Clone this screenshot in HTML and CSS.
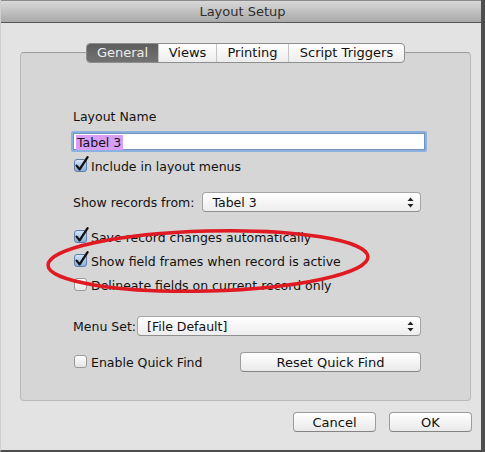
FILE: index.html
```html
<!DOCTYPE html>
<html lang="en">
<head>
    <meta charset="UTF-8">
    <meta name="viewport" content="width=device-width, initial-scale=1.0">
    <title>Layout Setup</title>
    <link rel="stylesheet" href="styles.css">
</head>
<body>
    <div class="window">
        <div class="titlebar">Layout Setup</div>

        <div class="sheet">
            <div class="panel">
                <div class="tabs">
                    <span class="tab active">General</span>
                    <span class="tab">Views</span>
                    <span class="tab">Printing</span>
                    <span class="tab">Script Triggers</span>
                </div>

                <div class="form">
                    <div class="label">Layout Name</div>
                    <div class="text-field"><span class="selected">Tabel 3</span></div>

                    <div class="check-row first">
                        <svg class="box" width="16" height="17" viewBox="0 0 16 17"><use href="#checked"/></svg>
                        <span>Include in layout menus</span>
                    </div>

                    <div class="field-row records">
                        <span class="field-label">Show records from:</span>
                        <div class="popup">
                            <span>Tabel 3</span>
                            <svg class="arrows" width="7" height="11" viewBox="0 0 7 11"><use href="#updown"/></svg>
                        </div>
                    </div>

                    <div class="check-group">
                        <div class="check-row">
                            <svg class="box" width="16" height="17" viewBox="0 0 16 17"><use href="#checked"/></svg>
                            <span>Save record changes automatically</span>
                        </div>
                        <div class="check-row">
                            <svg class="box" width="16" height="17" viewBox="0 0 16 17"><use href="#checked"/></svg>
                            <span>Show field frames when record is active</span>
                        </div>
                        <div class="check-row">
                            <svg class="box" width="16" height="17" viewBox="0 0 16 17"><use href="#unchecked"/></svg>
                            <span>Delineate fields on current record only</span>
                        </div>
                    </div>

                    <div class="field-row menu-set">
                        <span class="field-label">Menu Set:</span>
                        <div class="popup">
                            <span>[File Default]</span>
                            <svg class="arrows" width="7" height="11" viewBox="0 0 7 11"><use href="#updown"/></svg>
                        </div>
                    </div>

                    <div class="field-row quick-find">
                        <div class="check-row">
                            <svg class="box" width="16" height="17" viewBox="0 0 16 17"><use href="#unchecked"/></svg>
                            <span>Enable Quick Find</span>
                        </div>
                        <button class="push wide">Reset Quick Find</button>
                    </div>
                </div>

                <!-- hand drawn red mark over the checkboxes -->
                <svg class="ring" width="360" height="90" viewBox="0 0 360 90">
                    <ellipse cx="181" cy="42" rx="160" ry="30" transform="rotate(-1.5 181 42)" fill="none" stroke="#e01a22" stroke-width="3.5"/>
                </svg>
            </div>

            <div class="actions">
                <button class="push">Cancel</button>
                <button class="push">OK</button>
            </div>
        </div>
    </div>

    <svg class="defs" width="0" height="0">
        <defs>
            <linearGradient id="blueBox" x1="0" y1="0" x2="0" y2="1">
                <stop offset="0" stop-color="#d8e7f7"/>
                <stop offset="1" stop-color="#86acd9"/>
            </linearGradient>
            <linearGradient id="greyBox" x1="0" y1="0" x2="0" y2="1">
                <stop offset="0" stop-color="#ffffff"/>
                <stop offset="1" stop-color="#e4e4e4"/>
            </linearGradient>
            <g id="checked">
                <rect x="1.5" y="3.5" width="12" height="12" rx="2.5" fill="url(#blueBox)" stroke="#5f7fa6"/>
                <path d="M3.6 9.6 L6.6 13.4 L14.6 1.2" fill="none" stroke="#111" stroke-width="2.3" stroke-linecap="round" stroke-linejoin="round"/>
            </g>
            <g id="unchecked">
                <rect x="1.5" y="3.5" width="12" height="12" rx="2.5" fill="url(#greyBox)" stroke="#9a9a9a"/>
            </g>
            <g id="updown">
                <path d="M3.5 0.5 L6.5 4 L0.5 4 Z" fill="#222"/>
                <path d="M3.5 10.5 L6.5 7 L0.5 7 Z" fill="#222"/>
            </g>
        </defs>
    </svg>
</body>
</html>
```

FILE: styles.css
```css
body {
    margin: 0;
    padding: 0;
    font-family: "DejaVu Sans", "Lucida Grande", sans-serif;
    font-size: 12.5px;
    color: #111;
    background: #4a4a4a;
}

.defs {
    position: absolute;
}

.window {
    width: 485px;
    height: 452px;
    box-sizing: border-box;
    border-right: 4px solid #4e4e4e;
    border-bottom: 2px solid #4e4e4e;
    border-left: 1px solid #cfcfcf;
    background: #e3e3e3;
    display: flex;
    flex-direction: column;
    overflow: hidden;
}

.titlebar {
    height: 23px;
    box-sizing: border-box;
    border-top: 1px solid #8a8a8a;
    border-bottom: 1px solid #555;
    background: linear-gradient(#d8d8d8, #a9a9a9);
    color: #2e2e2e;
    font-size: 13px;
    text-align: center;
    line-height: 21px;
    padding-left: 3px;
}

.sheet {
    padding: 29px 0 0 19px;
}

.panel {
    position: relative;
    width: 451px;
    height: 349px;
    box-sizing: border-box;
    background: #d6d6d6;
    border: 1px solid #b9b9b9;
    border-top-color: #9c9c9c;
    border-radius: 4px;
}

.tabs {
    display: flex;
    margin: -10px auto 0;
    width: fit-content;
    height: 20px;
    box-sizing: border-box;
    border: 1px solid #8e8e8e;
    border-radius: 4px;
    background: linear-gradient(#ffffff, #ececec);
    overflow: hidden;
    font-size: 13px;
}

.tab {
    display: flex;
    align-items: center;
    justify-content: center;
    white-space: nowrap;
    flex-shrink: 0;
    border-left: 1px solid #c4c4c4;
    line-height: 18px;
}

.tab:first-child {
    border-left: none;
}

.tab.active {
    background: linear-gradient(#5e5e5e, #727272);
    color: #eeeeee;
    width: 71px;
}

.tab:nth-child(2) { width: 57px; }
.tab:nth-child(3) { width: 71px; }
.tab:nth-child(4) { width: 115px; }

.form {
    padding: 46px 49px 0 52px;
}

.label {
    line-height: 16px;
}

.text-field {
    margin-top: 6px;
    margin-left: -2px;
    width: 356px;
    height: 21px;
    box-sizing: border-box;
    border: 2px solid #8ab1e0;
    border-radius: 2px;
    box-shadow: inset 0 0 0 1px #7393bb;
    background: #fff;
    padding: 2px 0 0 3px;
}

.selected {
    display: inline-block;
    background: #d79df7;
    line-height: 15px;
    padding: 0 2px 0 1px;
}

.check-row {
    display: flex;
    align-items: center;
    height: 24px;
    gap: 2px;
}

.check-row.first {
    margin-top: 2px;
}

.box {
    overflow: visible;
    margin-top: -4px;
    flex-shrink: 0;
}

.field-row {
    display: flex;
    align-items: center;
}

.records {
    margin-top: 14px;
}

.records .field-label {
    margin-right: 8px;
}

.menu-set {
    margin-top: 19px;
}

.menu-set .field-label {
    margin-right: 1px;
}

.popup {
    flex: 1;
    display: flex;
    align-items: center;
    justify-content: space-between;
    height: 20px;
    box-sizing: border-box;
    border: 1px solid #a5a5a5;
    border-bottom-color: #8f8f8f;
    border-radius: 4px;
    background: linear-gradient(#ffffff, #ededed);
    padding: 0 6px 0 9px;
}

.arrows {
    flex-shrink: 0;
}

.check-group {
    margin-top: 13px;
}

.quick-find {
    margin-top: 16px;
    justify-content: space-between;
    height: 20px;
}

button.push {
    font-family: inherit;
    font-size: 13px;
    color: #111;
    height: 20px;
    box-sizing: border-box;
    border: 1px solid #9c9c9c;
    border-bottom-color: #848484;
    border-radius: 4px;
    background: linear-gradient(#ffffff, #e9e9e9);
    padding: 0;
}

button.wide {
    width: 181px;
}

.ring {
    position: absolute;
    left: 6px;
    top: 166px;
    overflow: visible;
}

.actions {
    display: flex;
    justify-content: flex-end;
    gap: 13px;
    width: 452px;
    margin-top: 11px;
}

.actions .push {
    width: 83px;
}
```
